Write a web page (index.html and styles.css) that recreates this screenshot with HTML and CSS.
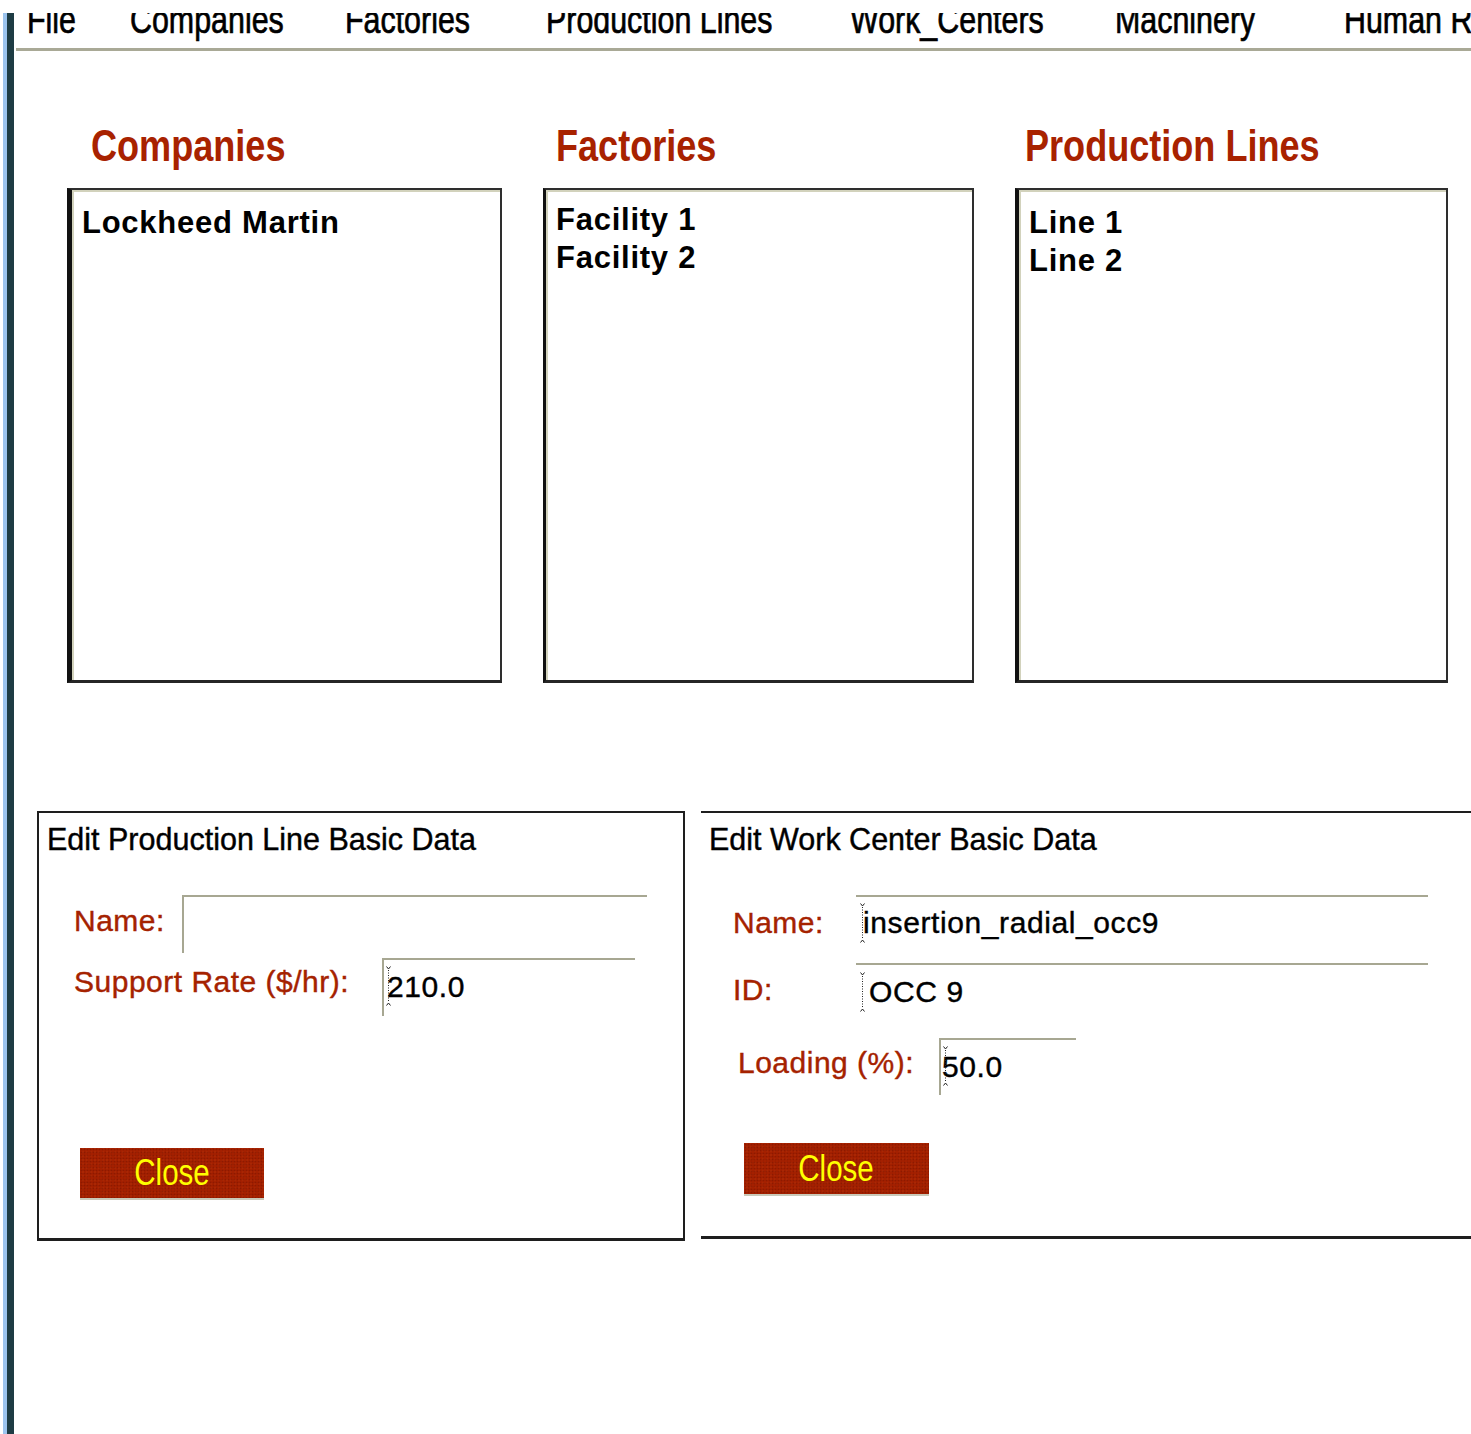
FILE: index.html
```html
<!DOCTYPE html>
<html lang="en">
<head>
<meta charset="utf-8">
<title>Production Setup</title>
<link rel="stylesheet" href="styles.css">
</head>
<body>
<div class="page">
  <div class="rail"></div>
  <div class="main">
    <nav class="menubar">
      <ul class="menu">
        <li><span class="narrow">File</span></li>
        <li><span class="narrow">Companies</span></li>
        <li><span class="narrow">Factories</span></li>
        <li><span class="narrow">Production Lines</span></li>
        <li><span class="narrow">Work_Centers</span></li>
        <li><span class="narrow">Machinery</span></li>
        <li><span class="narrow">Human Resources</span></li>
      </ul>
    </nav>

    <section class="lists">
      <div class="list-col col-companies">
        <h2 class="list-title"><span class="narrow">Companies</span></h2>
        <ul class="listbox box-companies">
          <li>Lockheed Martin</li>
        </ul>
      </div>
      <div class="list-col col-factories">
        <h2 class="list-title"><span class="narrow">Factories</span></h2>
        <ul class="listbox box-factories">
          <li>Facility 1</li>
          <li>Facility 2</li>
        </ul>
      </div>
      <div class="list-col col-lines">
        <h2 class="list-title"><span class="narrow">Production Lines</span></h2>
        <ul class="listbox box-lines">
          <li>Line 1</li>
          <li>Line 2</li>
        </ul>
      </div>
    </section>

    <section class="editors">
      <div class="editor editor-line">
        <h3 class="editor-title">Edit Production Line Basic Data</h3>
        <div class="field-row pl-name">
          <span class="field-label">Name:</span>
          <div class="field edged"></div>
        </div>
        <div class="field-row pl-rate">
          <span class="field-label">Support Rate ($/hr):</span>
          <div class="field edged">
            <svg class="caret" width="7" height="40" viewBox="0 0 7 40"><path d="M1.5 0.5 L3.5 3 L5.5 0.5 M1.5 39.5 L3.5 37 L5.5 39.5" fill="none" stroke="#222" stroke-width="1"/><path d="M3.5 4 V36" stroke="#222" stroke-width="1" stroke-dasharray="1 1.5"/></svg>
            <span class="field-text">210.0</span>
          </div>
        </div>
        <button class="close-btn" type="button"><span class="btn-label">Close</span></button>
      </div>

      <div class="editor editor-wc">
        <h3 class="editor-title">Edit Work Center Basic Data</h3>
        <div class="field-row wc-name">
          <span class="field-label">Name:</span>
          <div class="field">
            <svg class="caret" width="7" height="40" viewBox="0 0 7 40"><path d="M1.5 0.5 L3.5 3 L5.5 0.5 M1.5 39.5 L3.5 37 L5.5 39.5" fill="none" stroke="#222" stroke-width="1"/><path d="M3.5 4 V36" stroke="#222" stroke-width="1" stroke-dasharray="1 1.5"/></svg>
            <span class="field-text">insertion_radial_occ9</span>
          </div>
        </div>
        <div class="field-row wc-id">
          <span class="field-label">ID:</span>
          <div class="field">
            <svg class="caret" width="7" height="40" viewBox="0 0 7 40"><path d="M1.5 0.5 L3.5 3 L5.5 0.5 M1.5 39.5 L3.5 37 L5.5 39.5" fill="none" stroke="#222" stroke-width="1"/><path d="M3.5 4 V36" stroke="#222" stroke-width="1" stroke-dasharray="1 1.5"/></svg>
            <span class="field-text">OCC 9</span>
          </div>
        </div>
        <div class="field-row wc-load">
          <span class="field-label">Loading (%):</span>
          <div class="field edged">
            <svg class="caret" width="7" height="40" viewBox="0 0 7 40"><path d="M1.5 0.5 L3.5 3 L5.5 0.5 M1.5 39.5 L3.5 37 L5.5 39.5" fill="none" stroke="#222" stroke-width="1"/><path d="M3.5 4 V36" stroke="#222" stroke-width="1" stroke-dasharray="1 1.5"/></svg>
            <span class="field-text">50.0</span>
          </div>
        </div>
        <button class="close-btn" type="button"><span class="btn-label">Close</span></button>
      </div>
    </section>
  </div>
</div>
</body>
</html>
```

FILE: styles.css
```css
html, body {
  margin: 0;
  padding: 0;
  background: #fff;
}

.page {
  display: flex;
  height: 100vh;
  box-sizing: border-box;
  padding-top: 13px;
  overflow: hidden;
}

/* window edge on the left */
.rail {
  flex: none;
  width: 11px;
  margin-left: 3px;
  background: linear-gradient(to right, #9cc4ee 0 4px, #1e3c44 4px 11px);
}

.main {
  flex: 1;
  min-width: 0;
}

/* condensed face: squeeze the regular sans horizontally */
.narrow {
  display: inline-block;
  transform: scaleX(0.82);
  transform-origin: 0 50%;
}

/* ---------- menu bar ---------- */
.menubar {
  height: 35px;
  margin-left: 2px;
  border-bottom: 3px solid #a9a996;
  overflow: hidden;
}

.menu {
  list-style: none;
  margin: -12px 0 0;
  padding: 0 0 0 11px;
  display: grid;
  grid-template-columns: 103px 215px 201px 304px 265px 229px max-content;
  font: 38px/38px "Liberation Sans", Arial, sans-serif;
  -webkit-text-stroke: 0.7px #000;
  color: #000;
  white-space: nowrap;
}

.menu .narrow {
  transform: scaleX(0.8);
}

/* ---------- list columns ---------- */
.lists {
  display: grid;
  grid-template-columns: 435px 431px 433px;
  column-gap: 41px;
  padding-left: 53px;
  margin-top: 71px;
}

.list-title {
  margin: 0 0 18px;
  font: bold 44px/48px "Liberation Sans", Arial, sans-serif;
  color: #a82200;
  white-space: nowrap;
}

.col-companies .list-title { padding-left: 24px; }
.col-factories .list-title { padding-left: 13px; }
.col-lines .list-title { padding-left: 10px; }

.listbox {
  list-style: none;
  margin: 0;
  height: 495px;
  box-sizing: border-box;
  border: 2px solid #2e2e2e;
  border-left: 4px solid #111;
  border-bottom: 3px solid #262626;
  box-shadow: inset 2px 2px 0 #d2d2bc;
  padding: 14px 0 0 10px;
  font: bold 31px/38px "Liberation Sans", Arial, sans-serif;
  letter-spacing: 0.75px;
  color: #000;
}

.box-companies { border-left-width: 5px; }
.box-factories { border-left-width: 3px; padding-top: 11px; }

/* ---------- editor panels ---------- */
.editors {
  display: flex;
  margin-top: 128px;
}

.editor {
  box-sizing: border-box;
}

.editor-line {
  flex: none;
  width: 648px;
  height: 430px;
  margin-left: 23px;
  border: 2px solid #1e1e1e;
  border-bottom-width: 3px;
}

.editor-wc {
  flex: 1;
  height: 428px;
  margin-left: 16px;
  border-top: 2px solid #1e1e1e;
  border-bottom: 3px solid #1e1e1e;
}

.editor-title {
  margin: 0;
  padding: 9px 0 0 8px;
  font: normal 30.5px/34px "Liberation Sans", Arial, sans-serif;
  -webkit-text-stroke: 0.4px #000;
  color: #000;
}

.field-row {
  display: flex;
  align-items: flex-start;
}

.field-label {
  flex: none;
  box-sizing: border-box;
  padding-top: 9px;
  font: 30px/34px "Liberation Sans", Arial, sans-serif;
  -webkit-text-stroke: 0.4px #a52200;
  letter-spacing: 0.5px;
  color: #a52200;
  white-space: nowrap;
}

.field {
  position: relative;
  flex: none;
  height: 58px;
  box-sizing: border-box;
  border-top: 2px solid #a7a792;
  padding-top: 10px;
  font: 30px/34px "Liberation Sans", Arial, sans-serif;
  color: #000;
  white-space: nowrap;
}

.field.edged {
  border-left: 2px solid #a7a792;
}

.field-text {
  letter-spacing: 0.6px;
  -webkit-text-stroke: 0.4px #000;
}

/* text cursor drawn over the start of the value */
.caret {
  position: absolute;
  display: block;
}

/* production line panel rows */
.pl-name { margin-top: 39px; padding-left: 35px; }
.pl-name .field-label { width: 108px; }
.pl-name .field { width: 465px; }

.pl-rate { margin-top: 5px; padding-left: 35px; }
.pl-rate .field-label { width: 308px; padding-top: 7px; }
.pl-rate .field { width: 253px; padding-left: 3px; }
.pl-rate .caret { left: 1px; top: 6px; }

/* work center panel rows */
.wc-name { margin-top: 39px; padding-left: 32px; }
.wc-name .field-label { width: 123px; padding-top: 11px; }
.wc-name .field { width: 572px; padding-left: 7px; padding-top: 9px; }
.wc-name .caret { left: 3px; top: 6px; }

.wc-id { margin-top: 10px; padding-left: 32px; }
.wc-id .field-label { width: 123px; padding-top: 10px; }
.wc-id .field { width: 572px; padding-left: 13px; }
.wc-id .caret { left: 3px; top: 7px; }

.wc-load { margin-top: 17px; padding-left: 37px; }
.wc-load .field-label { width: 201px; padding-top: 8px; }
.wc-load .field { width: 137px; height: 57px; padding-left: 1px; }
.wc-load .caret { left: 1px; top: 6px; }

/* ---------- buttons ---------- */
.close-btn {
  display: block;
  width: 184px;
  height: 50px;
  margin: 132px 0 0 41px;
  padding: 0;
  border: 0;
  background-color: #a42000;
  background-image:
    radial-gradient(rgba(60, 0, 0, 0.22) 0.8px, transparent 1.1px),
    radial-gradient(rgba(200, 70, 20, 0.18) 0.8px, transparent 1.1px);
  background-size: 3px 3px, 4px 4px;
  background-position: 0 0, 1px 2px;
  box-shadow: 0 2px 0 #c9c9b9;
  color: #ffff00;
  font: 36px/50px "Liberation Sans", Arial, sans-serif;
  text-align: center;
}

.btn-label {
  display: inline-block;
  transform: scaleX(0.82);
}

.editor-wc .close-btn {
  width: 185px;
  height: 51px;
  margin: 48px 0 0 43px;
  line-height: 51px;
}
```
